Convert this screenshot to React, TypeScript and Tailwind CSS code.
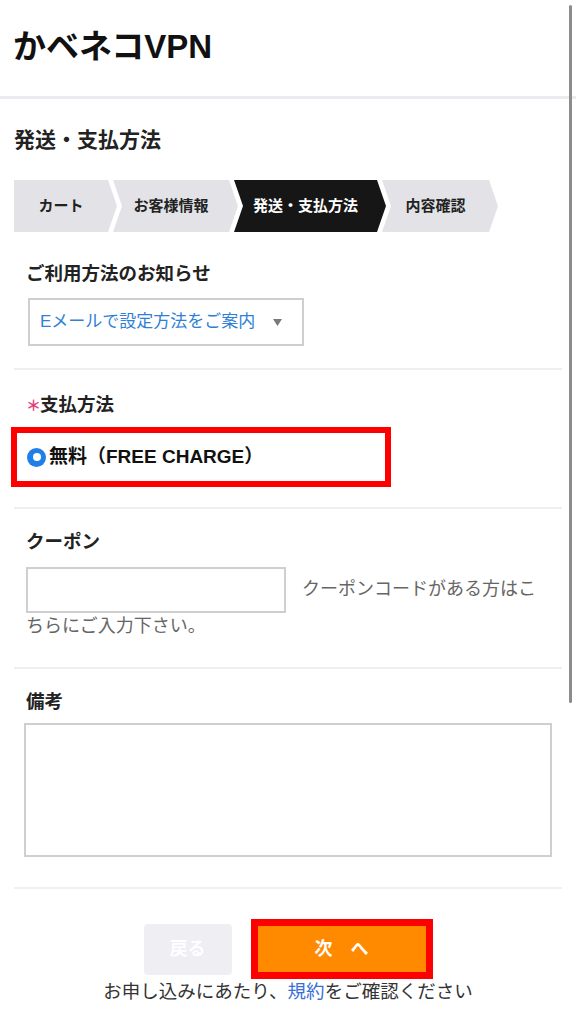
import { memo } from "react";

interface Step {
	label: string;
	width: string;
	first?: boolean;
	active?: boolean;
}

const steps: Step[] = [
	{ label: "カート", width: "w-[103px]", first: true },
	{ label: "お客様情報", width: "w-[125px]" },
	{ label: "発送・支払方法", width: "w-[152px]", active: true },
	{ label: "内容確認", width: "w-[116px]" },
];

const Stepper = memo(function Stepper() {
	return (
		<div className="mt-[26px] flex h-[52px]">
			{steps.map((step) => (
				<div
					key={step.label}
					className={`flex h-full shrink-0 items-center justify-center pr-[9px] text-[15px] font-bold ${step.width} ${
						step.first
							? "[clip-path:polygon(0_0,calc(100%_-_9px)_0,100%_50%,calc(100%_-_9px)_100%,0_100%)]"
							: "-ml-[4px] [clip-path:polygon(0_0,calc(100%_-_9px)_0,100%_50%,calc(100%_-_9px)_100%,0_100%,9px_50%)]"
					} ${step.active ? "bg-[#161616] text-white" : "bg-[#e3e2e6] text-[#222]"}`}
				>
					{step.label}
				</div>
			))}
		</div>
	);
});

export default function App() {
	return (
		<div className="relative h-[1024px] w-[576px] overflow-hidden bg-white font-['Liberation_Sans','Noto_Sans_CJK_JP',sans-serif] text-[#222]">
			{/* Header */}
			<header className="flex h-[99px] items-center border-b-[3px] border-[#ececf0] pb-[4px] pl-[13px]">
				<h1 className="text-[33px] font-bold leading-none text-[#111]">
					かベネコVPN
				</h1>
			</header>

			<main className="px-[14px]">
				<h2 className="mt-[26px] text-[21px] font-bold leading-[29px]">
					発送・支払方法
				</h2>

				<Stepper />

				{/* Notification method */}
				<section className="border-b-2 border-[#efefef] pb-[22px] pl-[12px] pt-[29px]">
					<p className="text-[18.5px] font-bold leading-[26px]">
						ご利用方法のお知らせ
					</p>
					<div className="ml-[2px] mt-[11px] flex h-[48px] w-[276px] items-center border-2 border-[#cfcfcf] pl-[10px]">
						<span className="text-[17px] text-[#2f7fd6]">
							Eメールで設定方法をご案内
						</span>
						<svg
							className="ml-[18px]"
							width="9"
							height="7"
							viewBox="0 0 9 7"
							aria-hidden="true"
						>
							<path d="M0 0h9L4.5 7z" fill="#7a7a7a" />
						</svg>
					</div>
				</section>

				{/* Payment method */}
				<section className="border-b-2 border-[#efefef] pb-[20px] pt-[22px]">
					<p className="flex items-center pl-[12px] text-[18.5px] font-bold leading-[26px]">
						<span className="w-[14px] font-['Noto_Sans_CJK_JP',sans-serif] text-[15px] font-bold text-[#e2407c]">
							＊
						</span>
						支払方法
					</p>
					<div className="-ml-[3px] mt-[9px] flex h-[60px] w-[380px] items-center border-[6px] border-[#ff0000] pl-[10px]">
						<span className="flex h-[19px] w-[19px] items-center justify-center rounded-full bg-[#1f80ea]">
							<span className="h-[8px] w-[8px] rounded-full bg-white" />
						</span>
						<span className="ml-[3px] text-[19px] font-bold text-[#111]">
							無料（FREE CHARGE）
						</span>
					</div>
				</section>

				{/* Coupon */}
				<section className="border-b-2 border-[#efefef] pb-[28px] pl-[12px] pr-[10px] pt-[20px]">
					<p className="text-[18.5px] font-bold leading-[26px]">クーポン</p>
					<div className="mt-[12px] text-[18px] leading-[26px] text-[#666]">
						<span className="mr-[16px] inline-block h-[46px] w-[260px] border-2 border-[#cfcfcf] align-middle" />
						クーポンコードがある方はこちらにご入力下さい。
					</div>
				</section>

				{/* Notes */}
				<section className="border-b-2 border-[#efefef] pb-[30px] pl-[12px] pt-[20px]">
					<p className="text-[18.5px] font-bold leading-[26px]">備考</p>
					<div className="-ml-[2px] mt-[8px] h-[134px] w-[528px] border-2 border-[#cfcfcf]" />
				</section>

				{/* Actions */}
				<div className="flex items-center justify-center gap-[19px] pt-[30px]">
					<button
						type="button"
						className="h-[51px] w-[88px] rounded-[4px] bg-[#efeef2] text-[18px] font-bold text-white"
					>
						戻る
					</button>
					<div className="h-[60px] w-[182px] border-[7px] border-[#ff0000]">
						<button
							type="button"
							className="h-full w-full bg-[#ff8a00] text-[18px] font-bold text-white"
						>
							次　へ
						</button>
					</div>
				</div>
				<p className="text-center text-[18.5px] leading-[26px] text-[#333]">
					お申し込みにあたり、
					<span className="text-[#3a6fd6]">規約</span>
					をご確認ください
				</p>
			</main>

			{/* Scroll indicator */}
			<div className="absolute right-[4px] top-[5px] h-[698px] w-[3px] rounded-full bg-[#8c8c8c]" />
		</div>
	);
}
